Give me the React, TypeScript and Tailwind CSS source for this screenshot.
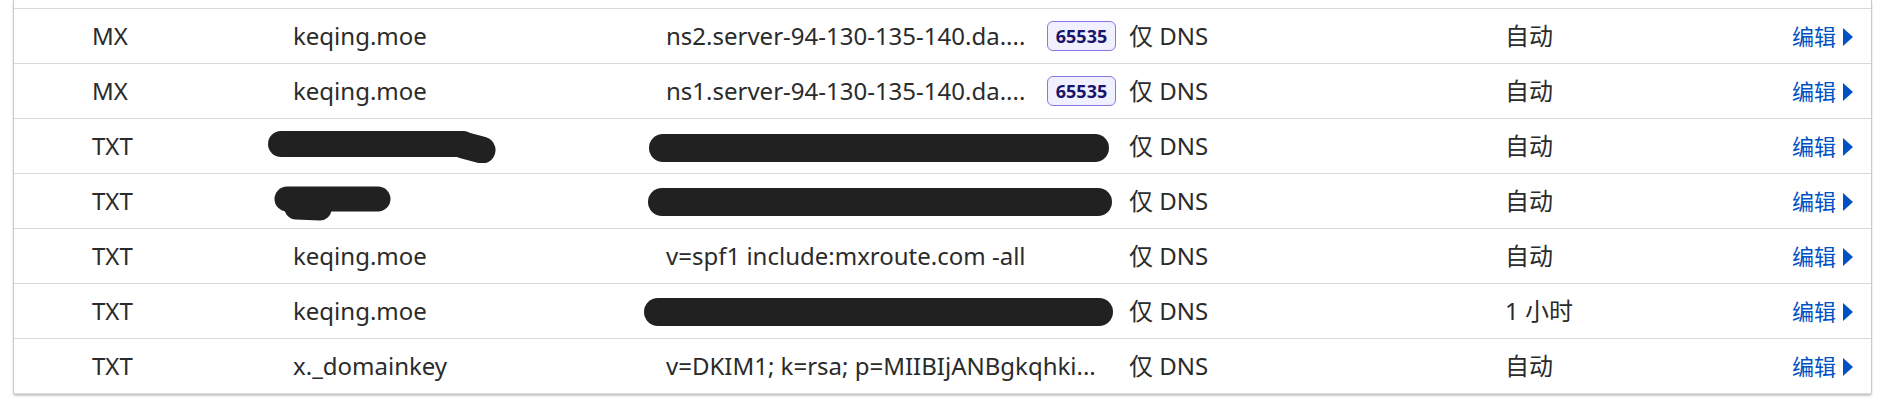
import React from "react"

type Rec = {
  type: string
  name: string | null
  content: string | null
  priority?: string
  ttl: string
  redact?: { name?: number; content?: number }
}

const records: Rec[] = [
  { type: "MX", name: "keqing.moe", content: "ns2.server-94-130-135-140.da....", priority: "65535", ttl: "自动" },
  { type: "MX", name: "keqing.moe", content: "ns1.server-94-130-135-140.da....", priority: "65535", ttl: "自动" },
  { type: "TXT", name: null, content: null, ttl: "自动", redact: { name: 1, content: 1 } },
  { type: "TXT", name: null, content: null, ttl: "自动", redact: { name: 2, content: 2 } },
  { type: "TXT", name: "keqing.moe", content: "v=spf1 include:mxroute.com -all", ttl: "自动" },
  { type: "TXT", name: "keqing.moe", content: null, ttl: "1 小时", redact: { content: 3 } },
  { type: "TXT", name: "x._domainkey", content: "v=DKIM1; k=rsa; p=MIIBIjANBgkqhki...", ttl: "自动" },
]

// marker scribbles over hidden values
function NameBlot({ kind }: { kind: number }) {
  if (kind === 1) {
    return (
      <svg width="232" height="32" viewBox="0 0 232 32" className="-ml-[26px] mt-[2px] shrink-0">
        <path d="M14 13 L196 13" stroke="#212121" strokeWidth="26" strokeLinecap="round" />
        <path d="M196 14 L215 19" stroke="#212121" strokeWidth="27" strokeLinecap="round" />
      </svg>
    )
  }
  return (
    <svg width="122" height="36" viewBox="0 0 122 36" className="-ml-[19px] mt-[6px] shrink-0">
      <path d="M13 13 L104 13" stroke="#212121" strokeWidth="25" strokeLinecap="round" />
      <path d="M22 22 L46 23" stroke="#212121" strokeWidth="23" strokeLinecap="round" />
    </svg>
  )
}

function ContentBlot({ kind }: { kind: number }) {
  const w = kind === 1 ? 462 : kind === 2 ? 466 : 471
  const ml = kind === 1 ? 18 : kind === 2 ? 19 : 23
  const mt = kind === 1 ? 3 : kind === 2 ? 1 : 2
  return (
    <svg
      width={w}
      height="30"
      viewBox={`0 0 ${w} 30`}
      className="shrink-0"
      style={{ marginLeft: -ml, marginTop: mt }}
    >
      <path d={`M15 15 L${w - 15} 15`} stroke="#212121" strokeWidth="28" strokeLinecap="round" />
    </svg>
  )
}

function Row({ r }: { r: Rec }) {
  return (
    <div className="grid h-[55px] grid-cols-[201px_373px_463px_376px_1fr_auto] items-center border-b border-[#d9d9d9] pl-[78px] pr-[18px]">
      <div>{r.type}</div>
      <div className="flex items-center">
        {r.redact?.name ? <NameBlot kind={r.redact.name} /> : r.name}
      </div>
      <div className="flex min-w-0 items-center pr-[13px]">
        {r.redact?.content ? (
          <ContentBlot kind={r.redact.content} />
        ) : (
          <span className="min-w-0 flex-1 overflow-hidden whitespace-nowrap">{r.content}</span>
        )}
        {r.priority && (
          <span className="ml-[8px] flex h-[30px] w-[69px] shrink-0 items-center justify-center rounded-[6px] border border-[#8479e4] bg-[#f1f0ff] text-[18px] font-bold text-[#19156b]">
            {r.priority}
          </span>
        )}
      </div>
      <div>仅 DNS</div>
      <div>{r.ttl}</div>
      <a className="flex items-center gap-[7px] text-[22px] text-[#0051c3]">
        编辑
        <svg width="10" height="18" viewBox="0 0 10 18" className="mt-[1px]">
          <path d="M0 0 L10 9 L0 18 Z" fill="#0051c3" />
        </svg>
      </a>
    </div>
  )
}

export default function App() {
  return (
    <div
      className="h-[405px] w-[1885px] bg-white px-[13px] text-[24px] text-[#2b2b2b]"
      style={{ fontFamily: '"Noto Sans", "Noto Sans CJK SC", sans-serif' }}
    >
      <div className="rounded-b-[3px] border-x border-[#cacaca] bg-white shadow-[0_2px_2px_rgba(0,0,0,0.22)]">
        <div className="h-[9px] border-b border-[#d9d9d9]" />
        {records.map((r, i) => (
          <Row key={i} r={r} />
        ))}
      </div>
    </div>
  )
}
